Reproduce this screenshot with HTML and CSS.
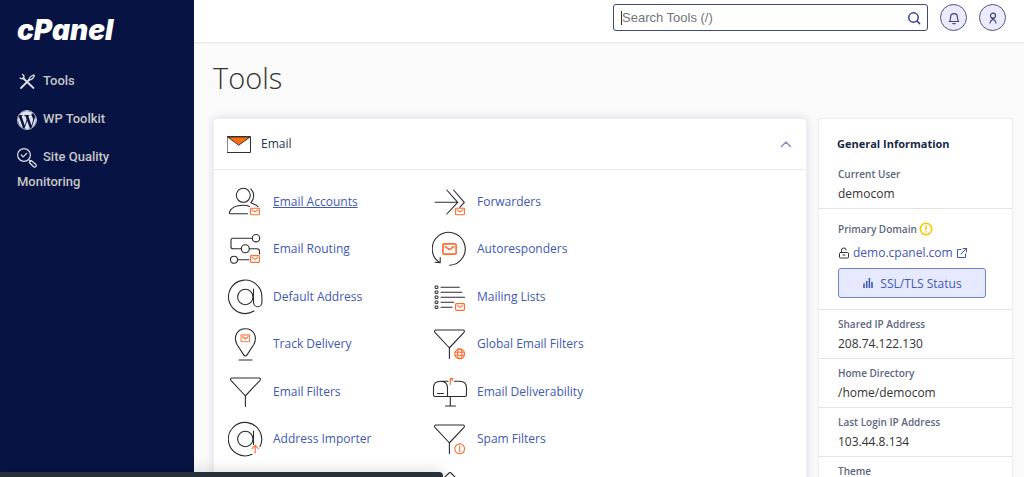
FILE: index.html
```html
<!DOCTYPE html>
<html lang="en">
<head>
<meta charset="utf-8">
<title>cPanel - Tools</title>
<link rel="stylesheet" href="styles.css">
</head>
<body>
<svg class="defs" aria-hidden="true">
  <symbol id="mail" viewBox="0 0 10 8"><rect x=".6" y=".6" width="8.8" height="6.8" rx=".8"/><path d="M2.200 2.400L5 4.400l2.800-2"/></symbol>
  <symbol id="funnel" viewBox="0 0 36 36"><path d="M3.800 4h27.400q2 .6.800 2.300L18.200 21q-.8.800-1.600 0L2.900 6.300Q1.800 4.600 3.800 4zM17.400 21.500v11"/></symbol>
</svg>
<div class="app">
  <aside class="sidebar">
    <div class="brand">cPanel</div>
    <nav class="nav">
      <a class="nav-link" href="#"><svg class="nav-icon" viewBox="0 0 20 20"><path d="M6 6L16.500 16M4 16l8-8" stroke-width="1.800"/><path d="M5.500 2.500q2.200 1.200 1.200 3.200T3 6M12 8q-.2-3 4.500-5l.8.800q-1.800 4.400-5.300 4.200z" stroke-width="1.300"/></svg><span>Tools</span></a>
      <a class="nav-link" href="#"><svg class="nav-icon" viewBox="0 0 24 24"><circle cx="12" cy="12" r="11.500" stroke-width=".9"/><path class="solid" d="M21.469 6.825c.84 1.537 1.318 3.300 1.318 5.175 0 3.979-2.156 7.456-5.363 9.325l3.295-9.527c.615-1.540.820-2.771.820-3.864 0-.405-.026-.780-.070-1.110m-7.981.105c.647-.030 1.232-.105 1.232-.105.582-.075.514-.930-.067-.899 0 0-1.755.135-2.880.135-1.064 0-2.850-.150-2.850-.150-.585-.030-.661.855-.075.885 0 0 .540.061 1.125.090l1.680 4.605-2.370 7.080L5.354 6.900c.649-.030 1.234-.100 1.234-.100.585-.075.516-.930-.065-.896 0 0-1.746.138-2.874.138-.200 0-.438-.008-.690-.015C4.911 3.150 8.235 1.215 12 1.215c2.809 0 5.365 1.072 7.286 2.833-.046-.003-.091-.009-.141-.009-1.060 0-1.812.923-1.812 1.914 0 .890.513 1.643 1.060 2.531.411.720.890 1.643.890 2.977 0 .915-.354 1.994-.821 3.479l-1.075 3.585-3.900-11.610.001.014zM12 22.784c-1.059 0-2.081-.153-3.048-.437l3.237-9.406 3.315 9.087c.024.053.050.101.078.149-1.120.393-2.325.609-3.582.609M1.211 12c0-1.564.336-3.050.935-4.390L7.290 21.709C3.694 19.960 1.212 16.271 1.211 12"/></svg><span>WP Toolkit</span></a>
      <a class="nav-link" href="#"><svg class="nav-icon" viewBox="0 0 20 20"><circle cx="7" cy="7" r="6.400"/><path d="M4.300 7l1.900 1.900 3.500-3.600M11.600 11.600l1.800 1.800M12.300 14.500l2-2 4.500 4q1 1.200 0 2.200t-2.200 0z"/></svg><span>Site Quality Monitoring</span></a>
    </nav>
  </aside>

  <div class="main">
    <header class="topbar">
      <form class="search">
        <input class="search-input" type="text" placeholder="Search Tools (/)" aria-label="Search Tools">
        <button class="search-button" type="button" aria-label="Search"><svg viewBox="0 0 14 14"><circle cx="6.500" cy="6.500" r="4.700"/><path d="M10 10l2.600 2.600"/></svg></button>
      </form>
      <button class="round" type="button" aria-label="Notifications"><svg viewBox="0 0 14 14"><path d="M2.300 10.500c1.200-.8 1.300-1.600 1.300-4.500a3.400 3.400 0 0 1 6.800 0c0 2.900.1 3.700 1.300 4.500zM5.800 12.600h2.400"/></svg></button>
      <button class="round" type="button" aria-label="Account"><svg viewBox="0 0 14 14"><circle cx="7" cy="4.700" r="2.500"/><path d="M4 12q.2-2.300 3-3.700 2.800 1.400 3 3.700M5.700 6.800L7 8.300l1.300-1.500"/></svg></button>
    </header>

    <main class="content">
      <h1 class="title">Tools</h1>
      <div class="columns">
        <section class="panel">
          <div class="panel-head">
            <svg class="panel-icon" viewBox="0 0 24 17"><rect x=".5" y=".5" width="23" height="16" fill="#fff"/><path d="M1 1h22L12 9z" fill="#ff6c0c"/></svg>
            <h2 class="panel-title">Email</h2>
            <button class="collapse" type="button" aria-label="Collapse Email"><svg viewBox="0 0 12 8"><path d="M1.500 6.500L6 2l4.500 4.500"/></svg></button>
          </div>
          <div class="tools">
            <a class="tool active" href="#"><svg class="icon" viewBox="0 0 36 36"><circle cx="15.300" cy="11.300" r="7"/><path d="M22.800 4.800c4 4 3.800 9.700 0 14l6 2.700 1 1.200M19.500 29.800H2.800q-1.800 0-1.300-1.800C3.500 23.500 8.500 21.300 15 21.300q4 0 6.500 1.200"/><use class="accent" href="#mail" x="22" y="23.500" width="10" height="8"/></svg><span>Email Accounts</span></a>
            <a class="tool" href="#"><svg class="icon" viewBox="0 0 36 36"><path d="M3 18.300h22.700M14.800 6l10.900 12.300L14.800 30M21.600 6L32.300 18.300l-4.500 5"/><use class="accent" href="#mail" x="23" y="23.500" width="10" height="8"/></svg><span>Forwarders</span></a>

            <a class="tool" href="#"><svg class="icon" viewBox="0 0 36 36"><circle cx="28" cy="7.200" r="3.700"/><circle cx="17.300" cy="17.800" r="4"/><circle cx="6" cy="28.800" r="3.500"/><path d="M24.300 7.200H5q-2 0-2 2v6.600q0 2 2 2h8.300M21.300 17.800H29q2.500 0 2.500 2.500V23M9.500 28.800H21"/><use class="accent" href="#mail" x="22" y="24" width="10" height="8"/></svg><span>Email Routing</span></a>
            <a class="tool" href="#"><svg class="icon" viewBox="0 0 36 36"><path d="M7.500 31.500A16.500 16.500 0 1 1 17.700 34.300M3 31.300l5.200.5V26.500"/><use class="accent" href="#mail" x="10" y="12" width="15" height="12"/></svg><span>Autoresponders</span></a>

            <a class="tool" href="#"><svg class="icon" viewBox="0 0 36 36"><circle cx="17.300" cy="18" r="7.700"/><path d="M26 32A16.700 16.700 0 1 1 33.900 18v5.500a4.200 4.200 0 0 1-8.400 0V10"/></svg><span>Default Address</span></a>
            <a class="tool" href="#"><svg class="icon" viewBox="0 0 36 36"><g stroke-width="1"><rect x="3.500" y="7" width="2.400" height="2.400"/><rect x="3.500" y="12" width="2.400" height="2.400"/><rect x="3.500" y="17" width="2.400" height="2.400"/><rect x="3.500" y="22" width="2.400" height="2.400"/><rect x="3.500" y="27" width="2.400" height="2.400"/></g><path d="M9 8.200h18.300M9 13.200h21M9 18.200h23.500M9 23.200h12.700M9 28.200h11"/><use class="accent" href="#mail" x="23" y="24" width="10" height="8"/></svg><span>Mailing Lists</span></a>

            <a class="tool" href="#"><svg class="icon" viewBox="0 0 36 36"><path d="M17.400 30q-1 0-2-1.600L9 18.500C5 11 9 2.700 17.400 2.700S29.800 11 25.800 18.500l-6.400 9.900q-1 1.600-2 1.600zM11 34h13"/><use class="accent" href="#mail" x="12.300" y="8.300" width="10" height="8"/></svg><span>Track Delivery</span></a>
            <a class="tool" href="#"><svg class="icon" viewBox="0 0 36 36"><use href="#funnel"/><g class="accent"><circle cx="27.700" cy="27.800" r="4.900"/><ellipse cx="27.700" cy="27.800" rx="2.200" ry="4.900"/><path d="M23 26.300h9.400M23 29.300h9.400"/></g></svg><span>Global Email Filters</span></a>

            <a class="tool" href="#"><svg class="icon" viewBox="0 0 36 36"><use href="#funnel"/></svg><span>Email Filters</span></a>
            <a class="tool" href="#"><svg class="icon" viewBox="0 0 36 36"><path d="M15.500 22.500V14q0-6.800-7-6.800t-7 6.800v7q0 1.500 1.500 1.500h30q1.500 0 1.500-1.500v-7q0-6.800-7-6.800H22.500M8.500 7.200H16M5.500 19.500h6M18.300 22.500V32M13.500 32h10"/><path class="accent" d="M18.300 10.500v-6h2.400v1.500h-2"/></svg><span>Email Deliverability</span></a>

            <a class="tool" href="#"><svg class="icon" viewBox="0 0 36 36"><circle cx="17.300" cy="18" r="7.700"/><path d="M24 33.300A16.700 16.700 0 1 1 32 25.500M25.500 10v13.500"/><path class="accent" d="M27.200 32v-7.500M24 27.600l3.200-3.200 3.200 3.200"/></svg><span>Address Importer</span></a>
            <a class="tool" href="#"><svg class="icon" viewBox="0 0 36 36"><use href="#funnel"/><g class="accent"><circle cx="27.700" cy="27.800" r="4.900"/><path d="M27.700 25v3.500M27.700 29.600v1.200"/></g></svg><span>Spam Filters</span></a>

            <a class="tool last" href="#" aria-label="More"><svg class="icon" viewBox="0 0 36 36"><path d="M12 9l5-5q1-1 2 0l5 5-6 6z"/></svg></a>
          </div>
        </section>

        <aside class="info">
          <h2 class="info-title">General Information</h2>
          <dl class="facts">
            <div class="fact"><dt>Current User</dt><dd>democom</dd></div>
            <div class="fact domain">
              <dt>Primary Domain <svg class="warn" viewBox="0 0 14 14"><circle cx="7" cy="7" r="5.700"/><path d="M7 4v3.500M7 9.800v.1"/></svg></dt>
              <dd>
                <div class="domain-line"><svg class="lock" viewBox="0 0 12 12"><rect x="1.500" y="5.500" width="9" height="5.500" rx="1"/><path d="M3.500 5.500v-2a2.300 2.300 0 0 1 4.600-.5M5 8h2"/></svg><a href="#">demo.cpanel.com</a><svg class="external" viewBox="0 0 12 12"><path d="M5 2.500H1.500v8h8V7M7 1.500h3.500V5M10.500 1.500L5 7"/></svg></div>
                <button class="ssl" type="button"><svg viewBox="0 0 12 12"><path d="M2 6.500V11M4.700 4V11M7.400 1v10M10 5v6"/></svg>SSL/TLS Status</button>
              </dd>
            </div>
            <div class="fact"><dt>Shared IP Address</dt><dd>208.74.122.130</dd></div>
            <div class="fact"><dt>Home Directory</dt><dd>/home/democom</dd></div>
            <div class="fact"><dt>Last Login IP Address</dt><dd>103.44.8.134</dd></div>
            <div class="fact"><dt>Theme</dt></div>
          </dl>
        </aside>
      </div>
    </main>
  </div>
  <div class="status-bar"></div>
</div>
</body>
</html>
```
FILE: styles.css
```css
* { box-sizing: border-box; }

body {
  margin: 0;
  background: #fafafa;
  color: #333;
  font: 12px/20px "Open Sans", "Noto Sans", sans-serif;
}

a { color: #4059b4; text-decoration: none; }
button { padding: 0; border: 0; background: none; font: inherit; }
svg { fill: none; stroke: currentColor; stroke-linecap: round; stroke-linejoin: round; }
h1, h2, dl, dd { margin: 0; }
.defs { position: absolute; width: 0; height: 0; }

.app { display: flex; height: 100vh; overflow: hidden; }

/* Sidebar */
.sidebar { flex: 0 0 194px; padding: 14px 40px 14px 17px; background: #071343; }
.brand {
  color: #fff;
  font: italic 900 28px/32px Inter, Roboto, sans-serif;
}
.nav { display: grid; gap: 13px; padding-top: 22px; }
.nav-link {
  color: #c6c6c6;
  font: 500 13px/25px Roboto, sans-serif;
}
.nav-icon {
  width: 20px;
  height: 20px;
  margin-right: 6px;
  vertical-align: middle;
  stroke: #dfe2ea;
  stroke-width: 1.2;
}
.solid { fill: #dfe2ea; stroke: none; }

/* Top bar */
.main { display: flex; flex: 1; flex-direction: column; min-width: 0; }
.topbar {
  display: flex;
  flex: 0 0 43px;
  align-items: center;
  justify-content: flex-end;
  gap: 12px;
  padding: 0 18px 7px;
  border-bottom: 1px solid #ececec;
  background: #fff;
  box-shadow: 0 1px 2px #0000000a;
}
.search {
  display: flex;
  align-items: center;
  width: 315px;
  height: 27px;
  padding-left: 7px;
  border: 1px solid #3f4880;
  border-radius: 3px;
}
.search::before { width: 1px; height: 14px; background: #333; content: ""; }
.search-input {
  flex: 1;
  min-width: 0;
  padding: 0;
  border: 0;
  outline: 0;
  background: none;
  font: 13px "Liberation Sans", Arial, sans-serif;
}
.search-input::placeholder { color: #757575; }
.search-button { width: 26px; color: #2f4392; }
.search-button svg { display: block; width: 14px; height: 14px; margin: 0 6px; stroke-width: 1.5; }
.round {
  display: grid;
  place-items: center;
  width: 27px;
  height: 27px;
  border: 1px solid #4d5487;
  border-radius: 50%;
  background: #ecebfd;
  color: #3d4679;
}
.round svg { width: 14px; height: 14px; stroke-width: 1.2; }

/* Content */
.content { padding: 13px 11px 0 19px; }
.title { color: #333; font-size: 29px; font-weight: 300; line-height: 44px; }
.columns { display: flex; align-items: flex-start; gap: 11px; padding-top: 18px; }
.panel {
  flex: 1;
  border: 1px solid #eceff5;
  border-radius: 4px;
  background: #fff;
  box-shadow: 0 0 8px #1a2b5024;
}
.panel-head {
  display: flex;
  align-items: center;
  height: 51px;
  padding: 0 14px 0 13px;
  border-bottom: 1px solid #e4e7f2;
}
.panel-icon { width: 24px; height: 17px; }
.panel-title { flex: 1; padding-left: 10px; color: #24364f; font-size: 12px; font-weight: 400; }
.collapse { color: #8592bd; }
.collapse svg { display: block; width: 12px; height: 8px; stroke-width: 1.5; }

.tools {
  display: grid;
  grid-template-columns: 204px 1fr;
  grid-template-rows: repeat(8, 1fr);
  min-height: 380px;
  padding: 0 14px;
  margin-top: 8px;
}
.tool { display: flex; align-items: center; gap: 9px; }
.tool.active span { text-decoration: underline; }
.tool.last { grid-column: 2; }
.icon { width: 36px; height: 36px; color: #2c2c2c; stroke-width: 1.1; }
.accent { stroke: #ff6c2c; }

/* General information */
.info {
  flex: 0 0 195px;
  border: 1px solid #efefef;
  border-radius: 3px;
  background: #fff;
  box-shadow: 0 0 2px #0000000d;
}
.info-title { padding: 15px 18px 11px; color: #16294a; font-size: 11px; font-weight: 700; line-height: 20px; }
.fact { padding: 5px 19px 4px; border-bottom: 1px solid #e4e4e4; }
.fact:first-child { padding-top: 0; }
dt { color: #5b6680; font-size: 10px; font-weight: 600; line-height: 18px; }
dd { color: #333; line-height: 21px; }
.domain { padding: 10px 19px 11px; }
.domain dt { line-height: 20px; }
.domain-line { display: flex; align-items: center; gap: 3px; padding: 3px 0 5px; }
.warn { width: 14px; height: 14px; color: #f5c800; stroke-width: 1.6; vertical-align: text-bottom; }
.lock { width: 12px; height: 12px; color: #333; }
.external { width: 12px; height: 12px; color: #4059b4; }
.ssl {
  display: flex;
  align-items: center;
  justify-content: center;
  gap: 6px;
  width: 148px;
  height: 30px;
  border: 1px solid #6f83c8;
  border-radius: 3px;
  background: #e7eafe;
  color: #4059b4;
}
.ssl svg { width: 12px; height: 12px; stroke-width: 1.6; stroke-linecap: butt; }

/* Browser status strip lying over the page */
.status-bar {
  position: fixed;
  bottom: 0;
  left: 0;
  width: 443px;
  height: 5px;
  border-radius: 0 4px 0 0;
  background: #26313a;
  box-shadow: 0 0 14px #00000040;
}
```
